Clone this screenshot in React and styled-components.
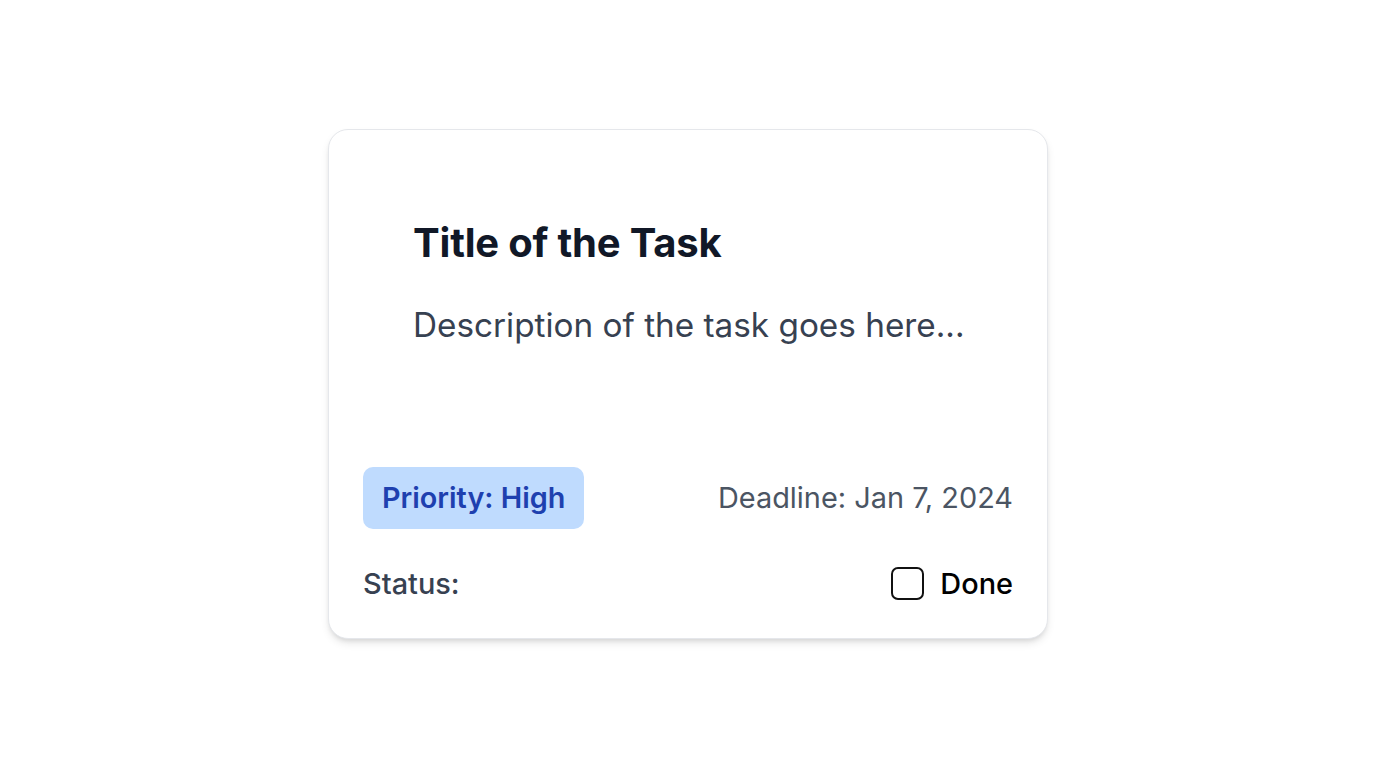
import React, { useState } from 'react'
import styled, { createGlobalStyle } from 'styled-components'

const GlobalStyle = createGlobalStyle`
    html, body {
        margin: 0;
        padding: 0;
        background: #fff;
        font-family: Inter, "Noto Sans", sans-serif;
    }
`;

const Page = styled.div`
    display: flex;
    justify-content: center;
    align-items: center;
    height: 100vh;
`;

const Card = styled.div`
    width: 720px;
    box-sizing: border-box;
    padding: 34px;
    background: #fff;
    border: 1px solid #e5e7eb;
    border-radius: 20px;
    box-shadow: 0 5px 8px -1px rgba(0, 0, 0, 0.1), 0 3px 5px -2px rgba(0, 0, 0, 0.1);
    display: flex;
    flex-direction: column;
`;

const Body = styled.div`
    padding: 55px 30px 120px 50px;
`;

const Title = styled.h2`
    margin: 0 0 36px;
    font-size: 40px;
    line-height: 48px;
    font-weight: 700;
    color: #111827;
    letter-spacing: -0.2px;
`;

const Description = styled.p`
    margin: 0;
    font-size: 33.3px;
    line-height: 44px;
    color: #374151;
    white-space: nowrap;
`;

const Row = styled.div`
    display: flex;
    justify-content: space-between;
    align-items: center;
    margin-top: ${(p) => p.$gap || 0}px;
`;

const Badge = styled.span`
    background: #bfdbfe;
    color: #1e40af;
    font-size: 28.8px;
    line-height: 36px;
    font-weight: 600;
    padding: 13px 19px;
    border-radius: 10px;
`;

const Deadline = styled.span`
    font-size: 28.9px;
    line-height: 36px;
    color: #4b5563;
`;

const Label = styled.span`
    font-size: 28.9px;
    line-height: 40px;
    font-weight: 500;
    color: #374151;
`;

const Check = styled.label`
    display: flex;
    align-items: center;
    gap: 16px;
    font-size: 28.9px;
    line-height: 40px;
    font-weight: 500;
    color: #000;
    cursor: pointer;
`;

const Box = styled.input`
    appearance: none;
    margin: 0;
    width: 33px;
    height: 33px;
    box-sizing: border-box;
    border: 2px solid #111;
    border-radius: 7px;
    background: ${(p) => (p.checked ? '#2563eb' : '#fff')};
    cursor: pointer;
`;

export default function App() {
    const [done, setDone] = useState(false)

    return (
        <>
            <GlobalStyle />
            <Page>
                <Card>
                    <Body>
                        <Title>Title of the Task</Title>
                        <Description>Description of the task goes here...</Description>
                    </Body>
                    <Row>
                        <Badge>Priority: High</Badge>
                        <Deadline>Deadline: Jan 7, 2024</Deadline>
                    </Row>
                    <Row $gap={34.5}>
                        <Label>Status:</Label>
                        <Check>
                            <Box type='checkbox' checked={done} onChange={(e) => setDone(e.target.checked)} />
                            Done
                        </Check>
                    </Row>
                </Card>
            </Page>
        </>
    )
}
